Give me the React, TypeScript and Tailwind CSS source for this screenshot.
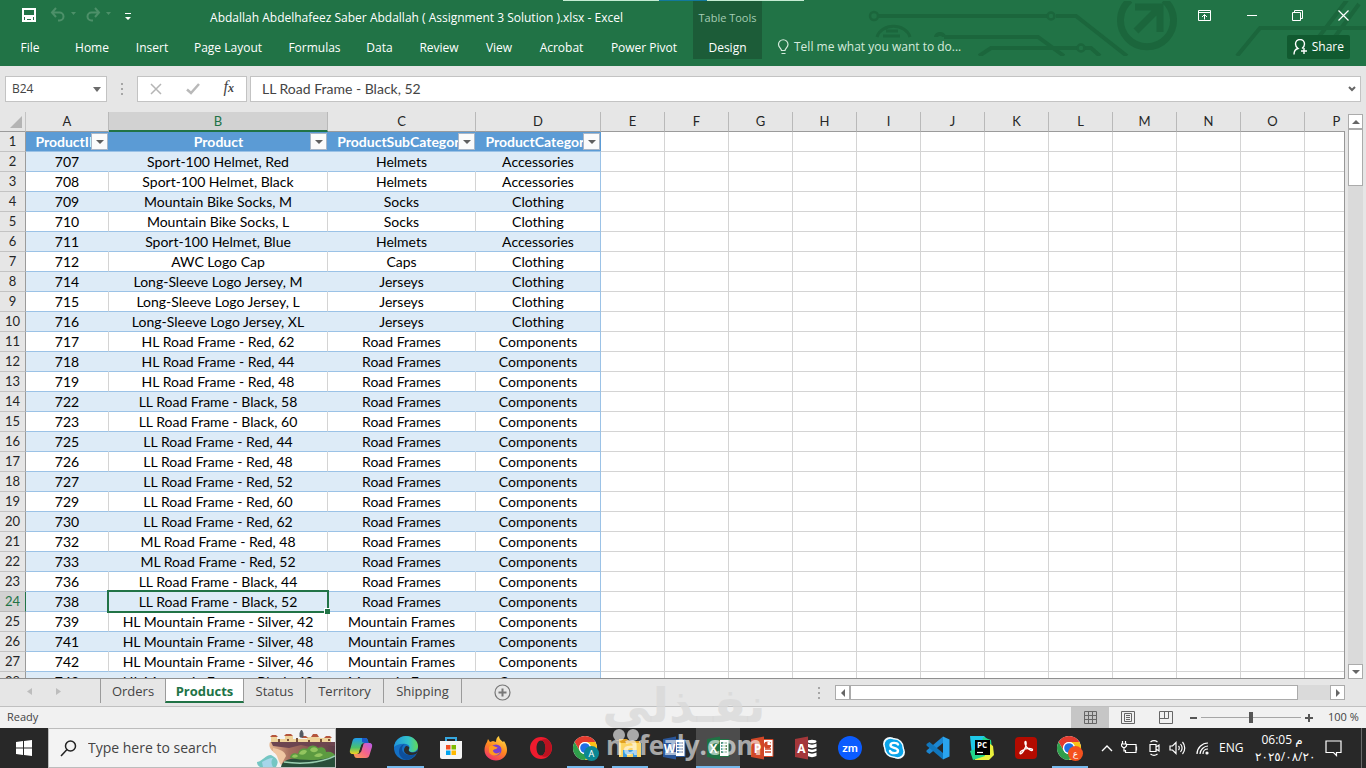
import type { ReactNode } from "react";

const tabs = [
  { label: "File", width: "w-[60px]" },
  { label: "Home", width: "w-16" },
  { label: "Insert", width: "w-14" },
  { label: "Page Layout", width: "w-24" },
  { label: "Formulas", width: "w-[77px]" },
  { label: "Data", width: "w-[53px]" },
  { label: "Review", width: "w-[66px]" },
  { label: "View", width: "w-[54px]" },
  { label: "Acrobat", width: "w-[71px]" },
  { label: "Power Pivot", width: "w-[94px]" },
];

const headers = ["ProductID", "Product", "ProductSubCategory", "ProductCategory"];

const products: [number, string, string, string][] = [
  [707, "Sport-100 Helmet, Red", "Helmets", "Accessories"],
  [708, "Sport-100 Helmet, Black", "Helmets", "Accessories"],
  [709, "Mountain Bike Socks, M", "Socks", "Clothing"],
  [710, "Mountain Bike Socks, L", "Socks", "Clothing"],
  [711, "Sport-100 Helmet, Blue", "Helmets", "Accessories"],
  [712, "AWC Logo Cap", "Caps", "Clothing"],
  [714, "Long-Sleeve Logo Jersey, M", "Jerseys", "Clothing"],
  [715, "Long-Sleeve Logo Jersey, L", "Jerseys", "Clothing"],
  [716, "Long-Sleeve Logo Jersey, XL", "Jerseys", "Clothing"],
  [717, "HL Road Frame - Red, 62", "Road Frames", "Components"],
  [718, "HL Road Frame - Red, 44", "Road Frames", "Components"],
  [719, "HL Road Frame - Red, 48", "Road Frames", "Components"],
  [722, "LL Road Frame - Black, 58", "Road Frames", "Components"],
  [723, "LL Road Frame - Black, 60", "Road Frames", "Components"],
  [725, "LL Road Frame - Red, 44", "Road Frames", "Components"],
  [726, "LL Road Frame - Red, 48", "Road Frames", "Components"],
  [727, "LL Road Frame - Red, 52", "Road Frames", "Components"],
  [729, "LL Road Frame - Red, 60", "Road Frames", "Components"],
  [730, "LL Road Frame - Red, 62", "Road Frames", "Components"],
  [732, "ML Road Frame - Red, 48", "Road Frames", "Components"],
  [733, "ML Road Frame - Red, 52", "Road Frames", "Components"],
  [736, "LL Road Frame - Black, 44", "Road Frames", "Components"],
  [738, "LL Road Frame - Black, 52", "Road Frames", "Components"],
  [739, "HL Mountain Frame - Silver, 42", "Mountain Frames", "Components"],
  [741, "HL Mountain Frame - Silver, 48", "Mountain Frames", "Components"],
  [742, "HL Mountain Frame - Silver, 46", "Mountain Frames", "Components"],
  [743, "HL Mountain Frame - Black, 42", "Mountain Frames", "Components"],
];

const emptyColumns = "EFGHIJKLMNOP".split("");
const SELECTED_ROW = 24;

/* ---------- Title bar and ribbon ---------- */

function CircuitArt() {
  return (
    <svg
      className="pointer-events-none absolute right-0 top-px"
      width="506"
      height="55"
      viewBox="860 1 506 55"
      fill="none"
      stroke="#1b663c"
      strokeWidth="4"
    >
      <circle cx="874" cy="16" r="4" strokeWidth="2.500" />
      <path d="M878 16h169M1056 16h20l51 40" />
      <circle cx="1051" cy="16" r="3.500" strokeWidth="2.500" />
      <path d="M877 37a17 14 0 0 1 33 0M883 36h17M886 31h12" strokeWidth="3" />
      <path d="M936 37a4 3 0 0 1 8 0M944 37h94l26 19M979 56l12-8h86M1085 48h6l9 8" />
      <circle cx="1081" cy="48" r="3.500" strokeWidth="2.500" />
      <path d="M1130 0a26.500 26.500 0 1 0 34 0" strokeWidth="7" />
      <path d="M1135 7h25v25M1160 7l-24 24" strokeWidth="7" />
      <path d="M1237 56l23-28h106M1318 38l29-38M1334 38l25-34" />
    </svg>
  );
}

function QuickAccess() {
  return (
    <div className="flex w-[140px] shrink-0 items-center pb-1.5 pl-[21px]">
      <button aria-label="Save">
        <svg width="16" height="16" viewBox="0 0 16 16" fill="none" stroke="#fff" strokeWidth="2">
          <path d="M2 2h12v12H2zM3 9h10M5 14v-3h6v3" />
        </svg>
      </button>
      <button aria-label="Undo" className="ml-3">
        <svg width="28" height="16" viewBox="0 0 28 16" fill="none" stroke="#4d9069" strokeWidth="2">
          <path d="M7 1L3 5.500 7 10M3 5.500h7.500a4 4 0 0 1 0 8H9" />
          <path d="M22 5h5l-2.500 3z" fill="#4d9069" stroke="none" />
        </svg>
      </button>
      <button aria-label="Redo" className="ml-2">
        <svg width="28" height="16" viewBox="0 0 28 16" fill="none" stroke="#4d9069" strokeWidth="2">
          <path d="M10 1l4 4.500L10 10M14 5.500H6.500a4 4 0 0 0 0 8H8" />
          <path d="M21 5h5l-2.500 3z" fill="#4d9069" stroke="none" />
        </svg>
      </button>
      <button aria-label="Customize Quick Access Toolbar" className="ml-3 mt-1">
        <svg width="6" height="8" viewBox="0 0 6 8" fill="#fff">
          <path d="M0 0h6v1H0zM0 4h6L3 7z" />
        </svg>
      </button>
    </div>
  );
}

function WindowControls() {
  return (
    <div className="flex h-[31px] items-center justify-end gap-[35px] pr-[17px]">
      <button aria-label="Ribbon display options">
        <svg width="13" height="12" viewBox="0 0 13 12" fill="none" stroke="#fff">
          <path d="M.5.5h12v10H.5zM.5 2.500h12M6.500 9.500V4.500M4 7l2.500-2.500L9 7" />
        </svg>
      </button>
      <button aria-label="Minimize">
        <svg width="11" height="11" viewBox="0 0 11 11" stroke="#fff">
          <path d="M1 5.500h10" />
        </svg>
      </button>
      <button aria-label="Restore">
        <svg width="11" height="11" viewBox="0 0 11 11" fill="none" stroke="#fff">
          <path d="M.5 2.500h8v8h-8zM2.500 2V.5h8v8H9" />
        </svg>
      </button>
      <button aria-label="Close">
        <svg width="11" height="11" viewBox="0 0 11 11" stroke="#fff" strokeWidth="1.200">
          <path d="M.5.5l10 10M10.500.5l-10 10" />
        </svg>
      </button>
    </div>
  );
}

function Ribbon() {
  return (
    <header className="relative flex h-[66px] shrink-0 overflow-hidden bg-[#217346] text-xs text-white">
      <CircuitArt />
      <div className="absolute left-[563px] top-0 flex h-px w-[241px] bg-[#c5ecd3]">
        <div className="ml-24 w-12 bg-[#12799c]" />
      </div>

      <div className="flex w-[693px] shrink-0 flex-col">
        <div className="flex h-9 items-center">
          <QuickAccess />
          <h1 className="flex-1 whitespace-nowrap text-center">
            Abdallah Abdelhafeez Saber Abdallah ( Assignment 3 Solution ).xlsx - Excel
          </h1>
        </div>
        <nav className="flex h-[23px] items-center">
          {tabs.map((tab) => (
            <button key={tab.label} className={`${tab.width} shrink-0 whitespace-nowrap text-center`}>
              {tab.label}
            </button>
          ))}
        </nav>
      </div>

      <div className="mt-px flex h-[58px] w-[69px] shrink-0 flex-col bg-[#1c5c38]">
        <div className="flex h-[35px] items-center justify-center whitespace-nowrap text-[11px] text-[#a5cdb4]">
          Table Tools
        </div>
        <button className="h-[23px]">Design</button>
      </div>

      <div className="relative flex flex-1 flex-col">
        <WindowControls />
        <div className="flex items-center justify-between pl-[15px] pr-4 pt-1">
          <button className="flex items-center gap-1 text-[#d5ebdd]">
            <svg width="13" height="16" viewBox="0 0 13 16" fill="none" stroke="currentColor" strokeWidth="1.200">
              <path d="M4.500 11.500c0-2-3-3-3-6a4.700 4.700 0 0 1 9.500 0c0 3-3 4-3 6zM4.500 14.500h4" />
            </svg>
            Tell me what you want to do...
          </button>
          <button className="flex h-6 items-center gap-1 rounded-xs bg-[#115a30] px-1.5">
            <svg width="15" height="16" viewBox="0 0 15 16" fill="none" stroke="#fff" strokeWidth="1.400">
              <path d="M1 15.500c0-4 2-5.500 4-6C3 8 2.500 6.500 2.500 5a4.500 4.500 0 0 1 9 0c0 2-1 3.500-2.500 4.500M11 9v6M8 12h6" />
            </svg>
            Share
          </button>
        </div>
      </div>
    </header>
  );
}

/* ---------- Formula bar ---------- */

function Dots() {
  return (
    <svg width="3" height="12" viewBox="0 0 3 12" fill="#a6a6a6">
      <path d="M0 0h2v2H0zM0 5h2v2H0zM0 10h2v2H0z" />
    </svg>
  );
}

function FormulaBar() {
  return (
    <div className="flex h-[46px] shrink-0 items-start pl-[5px] pr-[5px] pt-2.5 text-[#444]">
      <div className="flex h-[26px] w-[102px] items-center border border-[#c3c3c3] bg-white pr-[5px]">
        <input aria-label="Name Box" defaultValue="B24" className="min-w-0 flex-1 bg-transparent pl-1.5 text-xs outline-none" />
        <button aria-label="Name Box list">
          <svg width="8" height="5" viewBox="0 0 8 5" fill="#6b6b6b">
            <path d="M0 0h8L4 5z" />
          </svg>
        </button>
      </div>
      <div className="flex h-[26px] w-[30px] items-center justify-center">
        <Dots />
      </div>
      <div className="flex h-[26px] w-[110px] items-center justify-around border border-[#c3c3c3] bg-white">
        <button aria-label="Cancel">
          <svg width="12" height="12" viewBox="0 0 12 12" stroke="#b5b5b5" strokeWidth="1.500">
            <path d="M1 1l10 10M11 1L1 11" />
          </svg>
        </button>
        <button aria-label="Enter">
          <svg width="14" height="12" viewBox="0 0 14 12" fill="none" stroke="#b9b9b9" strokeWidth="2.500">
            <path d="M1 6.500L5 10l8-9" />
          </svg>
        </button>
        <button aria-label="Insert Function" className="pb-1 font-['Liberation_Serif',serif] text-base leading-none italic text-[#444]">
          f<span className="text-xs font-bold">x</span>
        </button>
      </div>
      <div className="ml-[3px] flex h-[26px] flex-1 items-center border border-[#c3c3c3] bg-white pr-1">
        <input
          aria-label="Formula Bar"
          defaultValue="LL Road Frame - Black, 52"
          className="min-w-0 flex-1 bg-transparent pl-[11px] font-['Lato',sans-serif] text-sm outline-none"
        />
        <button aria-label="Expand Formula Bar">
          <svg width="8" height="6" viewBox="0 0 8 6" fill="none" stroke="#666" strokeWidth="2">
            <path d="M1 1l3 3 3-3" />
          </svg>
        </button>
      </div>
    </div>
  );
}

/* ---------- Sheet ---------- */

function FilterButton({ name }: { name: string }) {
  return (
    <button
      aria-label={`Filter ${name}`}
      className="absolute right-px top-px flex h-[17px] w-[17px] items-center justify-center border border-[#a9b6c6] bg-[#fbfbfb]"
    >
      <svg width="8" height="4" viewBox="0 0 8 4" fill="#5f5f5f">
        <path d="M0 0h8L4 4z" />
      </svg>
    </button>
  );
}

function RowHeader({ row }: { row: number }) {
  const selected = row === SELECTED_ROW;
  return (
    <th
      scope="row"
      className={`h-5 border-b border-r p-0 text-[13px] font-normal ${
        selected
          ? "border-b-[#b9b9b9] border-r-[#217346] bg-[#d2d2d2] text-[#217346]"
          : "border-b-[#c3c3c3] border-r-[#9b9b9b] bg-[#e6e6e6] text-[#262626]"
      }`}
    >
      {row}
    </th>
  );
}

function EmptyCells() {
  return emptyColumns.map((col) => <td key={col} className="border-b border-r border-[#d4d4d4]" />);
}

function Sheet() {
  return (
    <div className="min-w-0 flex-1 overflow-hidden border-b border-[#8f8f8f]">
      <table className="w-max table-fixed border-separate border-spacing-0 text-center font-['Lato',sans-serif] text-sm leading-[19px] whitespace-nowrap text-black">
        <colgroup>
          <col className="w-[26px]" />
          <col className="w-[83px]" />
          <col className="w-[219px]" />
          <col className="w-[148px]" />
          <col className="w-[125px]" />
          {emptyColumns.map((col) => (
            <col key={col} className="w-16" />
          ))}
        </colgroup>
        <thead>
          <tr className="text-[13px] text-[#262626]">
            <th className="h-5 w-[26px] border-b border-r border-b-[#9b9b9b] border-r-[#c3c3c3] p-0">
              <svg className="ml-2.5" width="13" height="12" viewBox="0 0 13 12" fill="#b4b4b4">
                <path d="M12 0v12H0z" />
              </svg>
            </th>
            {["A", "B", "C", "D", ...emptyColumns].map((col) => (
              <th
                key={col}
                scope="col"
                className={`h-5 border-r p-0 font-normal ${
                  col === "B"
                    ? "border-b-2 border-b-[#217346] border-r-[#b9b9b9] bg-[#d2d2d2] leading-[18px] text-[#217346]"
                    : "border-b border-b-[#9b9b9b] border-r-[#b9b9b9]"
                }`}
              >
                {col}
              </th>
            ))}
          </tr>
        </thead>
        <tbody className="bg-white">
          <tr>
            <RowHeader row={1} />
            {headers.map((name) => (
              <th
                key={name}
                scope="col"
                className="relative h-5 border-b border-b-[#9bc2e6] bg-[#5b9bd5] p-0 font-bold text-white"
              >
                {name}
                <FilterButton name={name} />
              </th>
            ))}
            <EmptyCells />
          </tr>
          {products.map((product, i) => {
            const row = i + 2;
            const banded = i % 2 === 0;
            return (
              <tr key={product[0]}>
                <RowHeader row={row} />
                {product.map((value, c) => (
                  <td
                    key={c}
                    className={`relative h-5 border-b border-r border-b-[#9bc2e6] p-0 ${
                      banded ? "bg-[#ddebf7]" : "bg-white"
                    } ${c === 3 ? "border-r-[#9bc2e6]" : banded ? "border-r-[#ddebf7]" : "border-r-[#d4d4d4]"}`}
                  >
                    {value}
                    {row === SELECTED_ROW && c === 1 && (
                      <span className="absolute -inset-0.5 z-10 border-2 border-[#217346]">
                        <span className="absolute -bottom-[3px] -right-[3px] h-1.5 w-1.5 border-l border-t border-white bg-[#217346]" />
                      </span>
                    )}
                  </td>
                ))}
                <EmptyCells />
              </tr>
            );
          })}
        </tbody>
      </table>
    </div>
  );
}

function ScrollArrow({ label, d }: { label: string; d: string }) {
  return (
    <button aria-label={label} className="flex h-[15px] w-[15px] shrink-0 items-center justify-center border border-[#ababab] bg-white">
      <svg width="8" height="8" viewBox="0 0 8 8" fill="#666">
        <path d={d} />
      </svg>
    </button>
  );
}

function VerticalScroll() {
  return (
    <div className="ml-[3px] mr-[3px] flex w-[15px] flex-col pt-0.5">
      <ScrollArrow label="Scroll up" d="M0 6h8L4 2z" />
      <div className="flex-1 bg-[#dadada]">
        <div className="h-[57px] border border-[#ababab] bg-white" />
      </div>
      <ScrollArrow label="Scroll down" d="M0 2h8L4 6z" />
    </div>
  );
}

function SheetTab({ label, width }: { label: string; width: string }) {
  return (
    <button className={`${width} h-6 border-r border-[#9b9b9b]`}>
      {label}
    </button>
  );
}

function SheetTabs() {
  return (
    <div className="flex h-7 shrink-0 items-start border-b border-[#c0c0c0] pr-[21px] text-[13px] leading-6 text-[#444]">
      <div className="flex h-6 w-[101px] items-center gap-6 border-r border-[#9b9b9b] pl-[27px]">
        <button aria-label="Previous sheets">
          <svg width="5" height="7" viewBox="0 0 5 7" fill="#bdbdbd">
            <path d="M5 0v7L0 3.500z" />
          </svg>
        </button>
        <button aria-label="Next sheets">
          <svg width="5" height="7" viewBox="0 0 5 7" fill="#bdbdbd">
            <path d="M0 0v7l5-3.500z" />
          </svg>
        </button>
      </div>
      <button className="h-6 w-16">Orders</button>
      <button className="h-6 w-[79px] border-b-2 border-l border-r border-b-[#217346] border-l-[#9b9b9b] border-r-[#9b9b9b] bg-white font-bold text-[#217346]">
        Products
      </button>
      <SheetTab label="Status" width="w-[62px]" />
      <SheetTab label="Territory" width="w-[78px]" />
      <SheetTab label="Shipping" width="w-[78px]" />
      <button aria-label="New sheet" className="ml-8 mt-[5px]">
        <svg width="17" height="17" viewBox="0 0 17 17" fill="none" stroke="#777">
          <circle cx="8.500" cy="8.500" r="7.500" strokeWidth="1.200" />
          <path d="M8.500 4.500v8M4.500 8.500h8" strokeWidth="2" />
        </svg>
      </button>
      <div className="ml-auto mt-2">
        <Dots />
      </div>
      <div className="ml-[14px] mt-1.5 flex w-[510px] bg-[#dadada]">
        <ScrollArrow label="Scroll left" d="M6 0v8L2 4z" />
        <div className="mr-8 flex-1 border border-[#ababab] bg-white" />
        <ScrollArrow label="Scroll right" d="M2 0v8l4-4z" />
      </div>
    </div>
  );
}

function StatusBar() {
  return (
    <div className="flex h-[21px] shrink-0 items-center bg-[#f1f1f1] pr-[7px] text-[11px] text-[#444]">
      <span className="pl-[7px]">Ready</span>
      <button aria-label="Normal view" className="ml-auto flex h-full w-[38px] items-center justify-center bg-[#c6c6c6]">
        <svg width="13" height="13" viewBox="0 0 13 13" fill="none" stroke="#666">
          <path d="M.5.5h12v12H.5zM.5 4.500h12M.5 8.500h12M4.500 0v13M8.500 0v13" />
        </svg>
      </button>
      <button aria-label="Page layout view" className="flex h-full w-[38px] items-center justify-center">
        <svg width="14" height="13" viewBox="0 0 14 13" fill="none" stroke="#666">
          <path d="M.5.5h13v12H.5zM3.500 2.500h7v8h-7zM5 4.500h4M5 6.500h4M5 8.500h4" />
        </svg>
      </button>
      <button aria-label="Page break preview" className="flex h-full w-[38px] items-center justify-center">
        <svg width="14" height="13" viewBox="0 0 14 13" fill="none" stroke="#666">
          <path d="M.5.5h13v12H.5zM.5 7.500h9V0M5.500 0v7" />
        </svg>
      </button>
      <button aria-label="Zoom out" className="ml-[5px] mr-1">
        <svg width="7" height="8" viewBox="0 0 7 8" stroke="#555" strokeWidth="2">
          <path d="M0 4h7" />
        </svg>
      </button>
      <input
        type="range"
        aria-label="Zoom"
        min={0}
        max={100}
        defaultValue={50}
        className="h-3 w-[100px] appearance-none bg-transparent [&::-webkit-slider-runnable-track]:h-px [&::-webkit-slider-runnable-track]:bg-[#a6a6a6] [&::-webkit-slider-thumb]:-mt-[5px] [&::-webkit-slider-thumb]:h-[11px] [&::-webkit-slider-thumb]:w-1 [&::-webkit-slider-thumb]:appearance-none [&::-webkit-slider-thumb]:bg-[#555]"
      />
      <button aria-label="Zoom in" className="ml-1">
        <svg width="8" height="8" viewBox="0 0 8 8" stroke="#555" strokeWidth="2">
          <path d="M0 4h8M4 0v8" />
        </svg>
      </button>
      <span className="ml-[15px] w-[31px] whitespace-nowrap">100 %</span>
    </div>
  );
}

/* ---------- Taskbar icons ---------- */

function Copilot() {
  return (
    <svg width="24" height="24" viewBox="0 0 24 24">
      <defs>
        <linearGradient id="cop-a" x1="0" y1="0" x2="0" y2="1">
          <stop offset="0" stopColor="#1f9bf0" />
          <stop offset=".6" stopColor="#4cc26a" />
          <stop offset="1" stopColor="#f5d020" />
        </linearGradient>
        <linearGradient id="cop-b" x1="1" y1="0" x2="0" y2="1">
          <stop offset="0" stopColor="#b65cf0" />
          <stop offset=".5" stopColor="#f5648a" />
          <stop offset="1" stopColor="#fba04a" />
        </linearGradient>
      </defs>
      <path d="M7 2h9c2 0 2.500 1 3 3l.5 2h-4c-2 0-3 1-3.500 3l-1.500 5c-.5 2-1 3-3 3H4c-3 0-3.500-2-3-4l2.500-9C4 3 5 2 7 2z" fill="url(#cop-a)" />
      <path d="M13 2h3c2 0 2.500 1 3 3l.5 2h-4L13 6z" fill="#1a58c9" />
      <path d="M17 22H8c-2 0-2.500-1-3-3l-.5-1h4c2 0 3-1 3.500-3l1.500-5c.5-2 1-3 3-3H20c3 0 3.500 2 3 4l-2.500 8c-.5 2-1.500 3-3.500 3z" fill="url(#cop-b)" />
      <path d="M14.500 8l-2.500 8h-2l2.500-7z" fill="#2c2c2c" />
    </svg>
  );
}

function Edge() {
  return (
    <svg width="26" height="26" viewBox="0 0 26 26">
      <defs>
        <linearGradient id="edge-a" x1="0" y1=".3" x2="1" y2=".3">
          <stop offset="0" stopColor="#2196dc" />
          <stop offset=".6" stopColor="#33c3c9" />
          <stop offset="1" stopColor="#63d957" />
        </linearGradient>
      </defs>
      <circle cx="13" cy="13" r="12" fill="#1470c4" />
      <path d="M1 12C2 5 7 1 13 1c7 0 12 5 12 10 0 4-3 6-6 6-2 0-4-1-3-3 1-1 1-4-3-5-5-1-10 1-12 3z" fill="url(#edge-a)" />
      <path d="M9 14c0-3 2-5 4-5-5 0-7 4-7 8 0 4 4 8 8 8 4-1 7-3 9-6-6 3-14 0-14-5z" fill="#0d4f9c" />
      <path d="M16 14c-1 2 1 3.500 4 3.500 2 0 3.500-.8 5-2.500-.4 2-1 3-2 4-5 2-12 1-12-4 0-2 1-3 2-4 2 0 4 1 3 3z" fill="#2c2c2c" />
    </svg>
  );
}

function Store() {
  return (
    <svg width="24" height="24" viewBox="0 0 24 24">
      <path d="M7 6V2h10v4" fill="none" stroke="#36a7df" strokeWidth="2" />
      <path d="M1 5h22v16a2 2 0 0 1-2 2H3a2 2 0 0 1-2-2z" fill="#f5f5f5" />
      <path d="M7 9h4.500v4.500H7z" fill="#f25022" />
      <path d="M12.500 9H17v4.500h-4.500z" fill="#7fba00" />
      <path d="M7 14.500h4.500V19H7z" fill="#00a4ef" />
      <path d="M12.500 14.500H17V19h-4.500z" fill="#ffb900" />
    </svg>
  );
}

function Firefox() {
  return (
    <svg width="24" height="25" viewBox="0 0 24 25">
      <defs>
        <linearGradient id="ff-a" x1=".8" y1="0" x2=".3" y2="1">
          <stop offset="0" stopColor="#ffe14a" />
          <stop offset=".5" stopColor="#ff8a1e" />
          <stop offset="1" stopColor="#f0316b" />
        </linearGradient>
      </defs>
      <path d="M3 6l1-3 2 3 3-1 3 1c0-3 1-5 3-6 0 3 2 4 4 6l1-1c2 3 3 6 3 9 0 6-5 10.500-11 10.500S.5 20 .5 14c0-3 1-6 2.500-8z" fill="url(#ff-a)" />
      <circle cx="12" cy="14" r="5.500" fill="#7a3fd1" />
      <path d="M5 11c2-2 4-1 7 0 2 0 2 1 0 2-2 0-3 1-3 2 1 3 5 3 7 1-1 4-9 5-11 0z" fill="#ff9a1f" />
    </svg>
  );
}

function Opera() {
  return (
    <svg width="24" height="24" viewBox="0 0 24 24">
      <path fillRule="evenodd" d="M12 1a11 11 0 1 0 0 22 11 11 0 0 0 0-22zm0 3.500c2.800 0 4.500 3.500 4.500 7.500s-1.700 7.500-4.500 7.500S7.500 16 7.500 12 9.200 4.500 12 4.500z" fill="#ee1b2e" />
      <path d="M12 4.500c2.800 0 4.500 3.500 4.500 7.500s-1.700 7.500-4.500 7.500c2 1.500 5 1.500 7 .8a11 11 0 0 0 0-16.600c-2-.7-5-.7-7 .8z" fill="#bb1220" />
    </svg>
  );
}

function Chrome({ badge, color }: { badge: string; color: string }) {
  return (
    <svg width="28" height="27" viewBox="0 0 28 27">
      <circle cx="13" cy="13" r="12" fill="#fff" />
      <path d="M2.600 7a12 12 0 0 1 20.800 0H13a6 6 0 0 0-5.200 9z" fill="#e33b2e" />
      <path d="M23.400 7A12 12 0 0 1 13 25l5.200-9A6 6 0 0 0 13 7z" fill="#fbc116" />
      <path d="M2.600 7A12 12 0 0 0 13 25l5.200-9a6 6 0 0 1-10.400 0z" fill="#2f9e4b" />
      <circle cx="13" cy="13" r="6" fill="#fff" />
      <circle cx="13" cy="13" r="4.800" fill="#1f6fe5" />
      <circle cx="19.500" cy="18.500" r="7.500" fill={color} />
      <text x="19.500" y="22" textAnchor="middle" fill="#fff" fontSize="9" fontFamily="Noto Sans, DejaVu Sans, sans-serif">
        {badge}
      </text>
    </svg>
  );
}

function Explorer() {
  return (
    <svg width="24" height="22" viewBox="0 0 24 22">
      <path d="M1 2h8l2 2h11v4H1z" fill="#e0a020" />
      <path d="M1 6h22v14H1z" fill="#fcd462" />
      <path d="M5 20v-7h14v7h-4v-3H9v3z" fill="#3c9ade" />
    </svg>
  );
}

function Office({ letter, color }: { letter: string; color: string }) {
  return (
    <svg width="24" height="24" viewBox="0 0 24 24">
      {letter !== "A" && (
        <g>
          <path d="M12 3.500h11v17H12z" fill="#fff" stroke={color} />
          <path d="M15 7h6M15 10h6M15 13h6M15 16h6" stroke={color} strokeWidth="1.500" />
        </g>
      )}
      {letter === "X" && <path d="M18 5v14" stroke="#fff" />}
      {letter === "P" && (
        <g>
          <circle cx="17.500" cy="9" r="3.500" fill={color} />
          <path d="M17.500 9V5.500A3.500 3.500 0 0 1 21 9z" fill="#fff" />
        </g>
      )}
      {letter === "A" && (
        <g fill="#fff">
          <ellipse cx="18" cy="5.500" rx="4.500" ry="1.800" />
          <path d="M13.500 7.500c3 1.500 6 1.500 9 0V11c-3 1.500-6 1.500-9 0zM13.500 12.500c3 1.500 6 1.500 9 0V15c-3 1.500-6 1.500-9 0zM13.500 16.500c3 1.500 6 1.500 9 0V20c-3 1.500-6 1.500-9 0z" />
        </g>
      )}
      <path d="M1 3l13-2.500v23L1 21z" fill={color} />
      <text x="7.500" y="16.500" textAnchor="middle" fill="#fff" fontSize="12" fontWeight="bold" fontFamily="Open Sans, sans-serif">
        {letter}
      </text>
    </svg>
  );
}

function ZoomApp() {
  return (
    <svg width="24" height="24" viewBox="0 0 24 24">
      <circle cx="12" cy="12" r="12" fill="#0b5cff" />
      <text x="12" y="16" textAnchor="middle" fill="#fff" fontSize="12" fontWeight="bold" fontFamily="Lato, sans-serif">
        zm
      </text>
    </svg>
  );
}

function Skype() {
  return (
    <svg width="24" height="24" viewBox="0 0 24 24">
      <circle cx="8" cy="8" r="7" fill="#f2fbff" />
      <circle cx="16" cy="16" r="7" fill="#f2fbff" />
      <circle cx="12" cy="12" r="10" fill="#f2fbff" />
      <circle cx="8.500" cy="8.500" r="5.800" fill="#0aa4ea" />
      <circle cx="15.500" cy="15.500" r="5.800" fill="#0aa4ea" />
      <circle cx="12" cy="12" r="8.500" fill="#0aa4ea" />
      <path d="M16 8.500C15 6.500 8.500 6 8.500 9.300c0 3.200 7.500 1.800 7.500 5.400 0 3.300-7 3-8 .3" fill="none" stroke="#fff" strokeWidth="2.400" strokeLinecap="round" />
    </svg>
  );
}

function VsCode() {
  return (
    <svg width="24" height="24" viewBox="0 0 24 24">
      <path d="M17 .5l6.500 3v17l-6.500 3z" fill="#2aa4ee" />
      <path d="M17 .5v6.500L3.500 18 .5 16v-1.500z" fill="#1c86d1" />
      <path d="M17 23.500V17L3.500 6l-3 2v1.500z" fill="#1177bd" />
    </svg>
  );
}

function PyCharm() {
  return (
    <svg width="24" height="24" viewBox="0 0 24 24">
      <path d="M0 0h14l4 4-8 18L2 20z" fill="#1fc8e8" />
      <path d="M13 1l8 3 1 9-12 2z" fill="#21d789" />
      <path d="M16 5l7 5 1 9-5 5H5l-2-5z" fill="#e9f03c" />
      <path d="M0 15l12-4 3 9-12 4z" fill="#21d789" />
      <path d="M5 4h15v15H5z" fill="#000" />
      <path d="M7 16.500h6" stroke="#fff" strokeWidth="1.200" />
      <text x="12" y="12" textAnchor="middle" fill="#fff" fontSize="8" fontWeight="bold" fontFamily="Open Sans, sans-serif">
        PC
      </text>
    </svg>
  );
}

function Acrobat() {
  return (
    <svg width="22" height="22" viewBox="0 0 22 22">
      <rect width="22" height="22" rx="4" fill="#b30b00" />
      <path d="M5 16.500c1 1 3.500-1.500 5.500-6.500 1-3 .8-5.500 0-5.500s-1 2.500 1 5.500c2 2.500 5.500 4.500 6 3s-3.500-2-7-1-6 3-5.500 4.500z" fill="none" stroke="#fff" strokeWidth="1.300" />
    </svg>
  );
}

function SearchArt() {
  return (
    <svg width="78" height="38" viewBox="0 0 78 38">
      <defs>
        <linearGradient id="cliff" x1="0" y1="0" x2="1" y2="0">
          <stop offset="0" stopColor="#e9b993" />
          <stop offset=".3" stopColor="#a8705f" />
          <stop offset="1" stopColor="#5c3d48" />
        </linearGradient>
      </defs>
      <path d="M13 13h65v25H26c-4-5 0-9-6-13-6-3-9-7-7-12z" fill="url(#cliff)" />
      <path d="M14 13h64v4l-12-1-8 3-14-3-12 3-16-2z" fill="#6d4550" />
      <path d="M16 19c6 1 12 3 13 8l-5 9c-4-6-3-11-8-13z" fill="#f0c6a2" />
      <path d="M14 8h6v2h8V7h8v3h14V8h10l4 1h10v4H14z" fill="#efd39a" />
      <path d="M13 8h8l-2-2h-4zM27 7h9l-2-2h-5zM44 9h7l-2-2h-3zM54 8h8l-2-3h-4zM67 9h8l-2-2h-4z" fill="#b5563d" />
      <path d="M22 10v3M31 10v2M40 9v4M52 11v2M64 10v3M72 10v2" stroke="#7a5138" strokeWidth="2" />
      <path d="M43 8V4l1.500-3L46 4v4z" fill="#555b62" stroke="#555b62" />
      <path d="M0 33c6-1 8-7 14-7 5 3 9 5 5 12H3c-2-1-3-3-3-5z" fill="#74c6c3" />
      <path d="M5 33c4-2 7-4 11-4-2 3-2 5 0 9H6z" fill="#a6d6ea" />
      <path d="M24 38c2-10 16-9 27-9s20 0 27-4v13z" fill="#284f3a" />
      <path d="M33 29c0-4 4-6 8-4 1-5 5-7 9-5 3-5 9-4 11-1 5-2 8 1 8 4 5-1 7 1 9 3-8 6-30 6-45 3z" fill="#5c9a40" />
      <path d="M42 25c1-4 6-5 8-3-1 3-4 5-8 3zM53 21c2-4 7-3 8 0-2 3-6 3-8 0zM57 27c2-3 7-4 9-1-2 2-6 3-9 1zM35 28c1-3 4-3 6-1-1 2-4 2-6 1z" fill="#93c55f" />
      <path d="M27 33c14 2 36 2 51-6" fill="none" stroke="#9bd0b2" strokeWidth="1.500" />
    </svg>
  );
}

/* ---------- Taskbar ---------- */

type TaskItem = { name: string; icon: ReactNode; wide?: boolean; running?: boolean; active?: boolean };

const taskItems: TaskItem[] = [
  { name: "Copilot", icon: <Copilot />, wide: true },
  { name: "Edge", icon: <Edge />, wide: true, running: true },
  { name: "Microsoft Store", icon: <Store />, wide: true },
  { name: "Firefox", icon: <Firefox />, wide: true },
  { name: "Opera", icon: <Opera />, wide: true },
  { name: "Chrome", icon: <Chrome badge="A" color="#0b8793" />, wide: true, running: true },
  { name: "File Explorer", icon: <Explorer />, running: true },
  { name: "Word", icon: <Office letter="W" color="#2a5699" /> },
  { name: "Excel", icon: <Office letter="X" color="#1f7244" />, active: true },
  { name: "PowerPoint", icon: <Office letter="P" color="#d04727" /> },
  { name: "Access", icon: <Office letter="A" color="#a4373a" /> },
  { name: "Zoom", icon: <ZoomApp /> },
  { name: "Skype", icon: <Skype /> },
  { name: "Visual Studio Code", icon: <VsCode /> },
  { name: "PyCharm", icon: <PyCharm /> },
  { name: "Acrobat", icon: <Acrobat /> },
  { name: "Chrome profile", icon: <Chrome badge="ع" color="#f4511e" />, running: true },
];

function Tray() {
  return (
    <div className="ml-auto flex shrink-0 items-center text-white">
      <svg width="12" height="8" viewBox="0 0 12 8" fill="none" stroke="#fff" strokeWidth="1.400">
        <path d="M1 7l5-5 5 5" />
      </svg>
      <svg className="ml-2" width="17" height="14" viewBox="0 0 17 14" fill="none" stroke="#fff" strokeWidth="1.200">
        <path d="M6 3.500h9v8H4.500V9M15.500 5.500v4M1.500 0v3M4.500 0v3M.5 3h5v2L4 6.500H2L.5 5zM3 7v3h1.500" />
      </svg>
      <svg className="ml-2.5" width="13" height="16" viewBox="0 0 13 16" fill="none" stroke="#fff" strokeWidth="1.200">
        <path d="M2 4.500h6v7H2zM8 7l3-2v6L8 9M2.500 2c2-1.500 5-1.500 7 0M2.500 14c2 1.500 5 1.500 7 0" />
      </svg>
      <svg className="ml-2" width="17" height="14" viewBox="0 0 17 14" fill="none" stroke="#fff" strokeWidth="1.200">
        <path d="M1 5h2.500L7 1.500v11L3.500 9H1zM9.500 5c1 1 1 3 0 4M11.500 3c2 2.500 2 5.500 0 8M13.500 1c3 3.500 3 8.500 0 12" />
      </svg>
      <svg className="ml-2.5" width="13" height="13" viewBox="0 0 13 13" fill="none" stroke="#fff" strokeWidth="1.200">
        <path d="M1 12C1 6 6 1 12 1M4 12c0-4 4-8 8-8M7 12c0-3 2-5 5-5" />
        <circle cx="11" cy="11" r="1" fill="#fff" />
      </svg>
      <span className="ml-2.5 w-6 text-xs">ENG</span>
      <div className="ml-3 w-[54px] whitespace-nowrap text-center text-xs leading-[17px]">
        <div>06:05 م</div>
        <div>٢٠٢٥/٠٨/٢٠</div>
      </div>
      <button aria-label="Notifications" className="ml-4">
        <svg width="17" height="17" viewBox="0 0 17 17" fill="none" stroke="#fff" strokeWidth="1.200">
          <path d="M1 1h15v11.500h-4.500v3l-3-3H1z" />
        </svg>
      </button>
      <div className="ml-[19px] mr-1 h-10 w-px bg-[#6a6a6a]" />
    </div>
  );
}

function Taskbar() {
  return (
    <footer className="flex h-10 shrink-0 bg-[#282828]">
      <button aria-label="Start" className="flex w-12 shrink-0 items-center justify-center">
        <svg width="16" height="16" viewBox="0 0 16 16" fill="#fff">
          <path d="M0 2l7-1v6.500H0zM8 1l8-1v7.500H8zM0 8.500h7V15l-7-1zM8 8.500h8V16l-8-1z" />
        </svg>
      </button>
      <label className="flex w-72 shrink-0 items-center border border-[#bcbcbc] bg-[#f3f3f3] pl-[11px] text-[#444]">
        <svg className="mr-[11px] shrink-0" width="17" height="17" viewBox="0 0 17 17" fill="none" stroke="#222" strokeWidth="1.500">
          <circle cx="10.500" cy="6" r="5" />
          <path d="M7 9.500L1 16" />
        </svg>
        <input
          aria-label="Search"
          placeholder="Type here to search"
          className="min-w-0 flex-1 bg-transparent text-sm outline-none placeholder:text-[#444]"
        />
        <SearchArt />
      </label>
      <nav className="ml-0.5 flex shrink-0">
        {taskItems.map((item) => (
          <button
            key={item.name}
            aria-label={item.name}
            className={`relative flex items-center justify-center ${item.wide ? "w-[45px]" : "w-11"} ${
              item.active ? "bg-[#4c4c4c]" : ""
            }`}
          >
            {item.icon}
            {(item.running || item.active) && (
              <span className={`absolute bottom-0 h-0.5 bg-[#76b9ed] ${item.active ? "inset-x-0" : "inset-x-1"}`} />
            )}
          </button>
        ))}
      </nav>
      <Tray />
    </footer>
  );
}

function Watermark() {
  return (
    <div className="pointer-events-none absolute bottom-0 left-[600px] flex h-[88px] w-[168px] flex-col items-center">
      <div lang="ar" className="h-[50px] font-['DejaVu_Sans',sans-serif] text-5xl leading-[50px] font-bold text-[#d9d9d9]/80">
        نفـذلى
      </div>
      <div className="absolute left-[13px] top-[49px] flex gap-0.5">
        <span className="h-3 w-3 rounded-full bg-white/60" />
        <span className="h-3 w-3 rounded-full bg-white/60" />
      </div>
      <div className="text-[26px] leading-[30px] font-bold text-white/60">nafezly.com</div>
    </div>
  );
}

export default function App() {
  return (
    <div className="relative flex h-screen flex-col overflow-hidden bg-[#e6e6e6] font-['Open_Sans','DejaVu_Sans',sans-serif]">
      <Ribbon />
      <FormulaBar />
      <main className="flex min-h-0 flex-1">
        <Sheet />
        <div className="mt-[19px] w-px bg-[#979797]" />
        <VerticalScroll />
      </main>
      <SheetTabs />
      <StatusBar />
      <Taskbar />
      <Watermark />
    </div>
  );
}
